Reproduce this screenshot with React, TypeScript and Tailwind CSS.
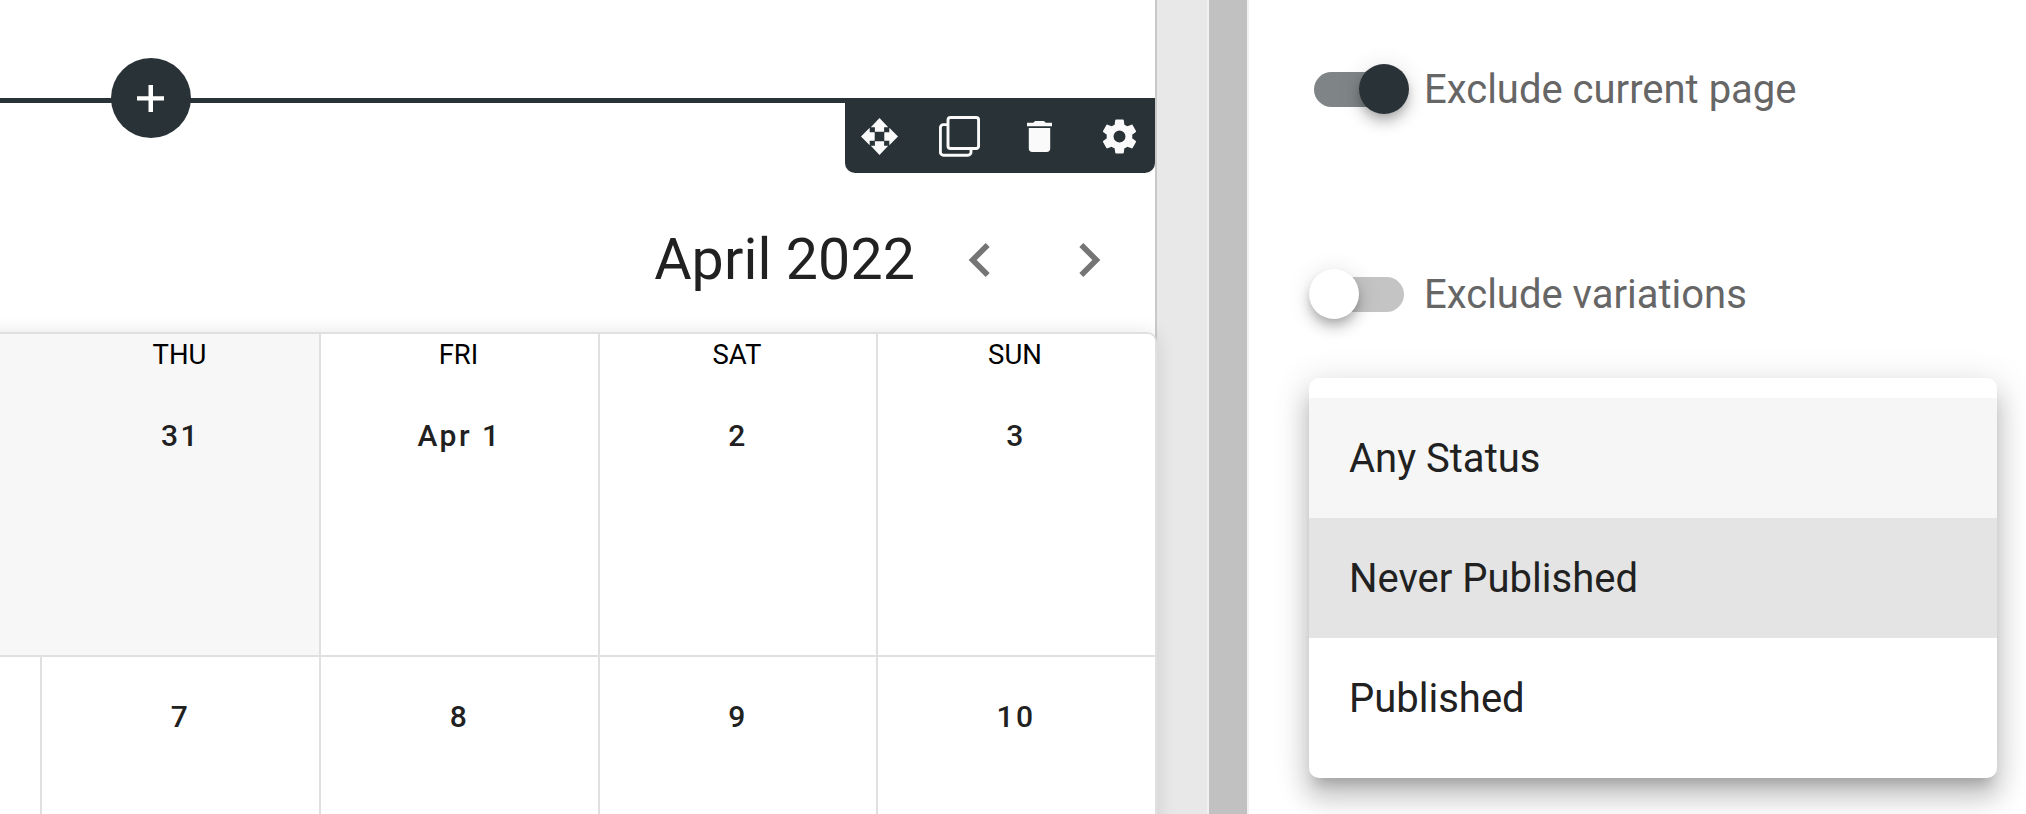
import React from "react";

const iconPaths = {
  trash: "M19,4H15.5L14.5,3H9.5L8.5,4H5V6H19M6,19A2,2 0 0,0 8,21H16A2,2 0 0,0 18,19V7H6V19Z",
  cog: "M12,15.5A3.5,3.5 0 0,1 8.5,12A3.5,3.5 0 0,1 12,8.5A3.5,3.5 0 0,1 15.5,12A3.5,3.5 0 0,1 12,15.5M19.43,12.97C19.47,12.65 19.5,12.33 19.5,12C19.5,11.67 19.47,11.34 19.43,11L21.54,9.37C21.73,9.22 21.78,8.95 21.66,8.73L19.66,5.27C19.54,5.05 19.27,4.96 19.05,5.05L16.56,6.05C16.04,5.66 15.5,5.32 14.87,5.07L14.5,2.42C14.46,2.18 14.25,2 14,2H10C9.75,2 9.54,2.18 9.5,2.42L9.13,5.07C8.5,5.32 7.96,5.66 7.44,6.05L4.95,5.05C4.73,4.96 4.46,5.05 4.34,5.27L2.34,8.73C2.21,8.95 2.27,9.22 2.46,9.37L4.57,11C4.53,11.34 4.5,11.67 4.5,12C4.5,12.33 4.53,12.65 4.57,12.97L2.46,14.63C2.27,14.78 2.21,15.05 2.34,15.27L4.34,18.73C4.46,18.95 4.73,19.03 4.95,18.95L7.44,17.94C7.96,18.34 8.5,18.68 9.13,18.93L9.5,21.58C9.54,21.82 9.75,22 10,22H14C14.25,22 14.46,21.82 14.5,21.58L14.87,18.93C15.5,18.67 16.04,18.34 16.56,17.94L19.05,18.95C19.27,19.03 19.54,18.95 19.66,18.73L21.66,15.27C21.78,15.05 21.73,14.78 21.54,14.63L19.43,12.97Z",
  left: "M15.41,16.58L10.83,12L15.41,7.41L14,6L8,12L14,18L15.41,16.58Z",
  right: "M8.59,16.58L13.17,12L8.59,7.41L10,6L16,12L10,18L8.59,16.58Z",
};

function Toolbar() {
  return (
    <div className="absolute right-0 top-[98px] grid h-[75px] w-[310px] grid-cols-[69px_91px_69px_91px] items-center rounded-b-[10px] bg-[#293237] pt-[1px] text-[#fafafa]">
      <button className="flex justify-center">
        <svg viewBox="0 0 37 37" className="size-[37px]" fill="currentColor">
          <path d="M18.5 0 27.2 9.3H23.1V13.7H13.9V9.3H9.8ZM18.5 37 27.2 27.7H23.1V23.3H13.9V27.7H9.8ZM0 18.5 8.7 9.8V14.2H13.7V22.8H8.7V27.2ZM37 18.5 28.3 9.8V14.2H23.3V22.8H28.3V27.2Z" />
        </svg>
      </button>
      <button className="flex justify-center">
        <svg viewBox="0 0 41 41" className="size-[41px]" fill="none" stroke="currentColor" strokeWidth="2.9">
          <rect x="9" y="1.5" width="30.6" height="31" rx="2.5" />
          <path d="M9 8.6H4.4a3 3 0 0 0-3 3V36.2a3 3 0 0 0 3 3H29a3 3 0 0 0 3-3V32.4" />
        </svg>
      </button>
      <button className="flex justify-center">
        <svg viewBox="5 3 14 18" preserveAspectRatio="none" className="h-[31px] w-[25px]" fill="currentColor">
          <path d={iconPaths.trash} />
        </svg>
      </button>
      <button className="flex justify-center">
        <svg viewBox="0 0 24 24" className="size-[41px]" fill="currentColor">
          <path d={iconPaths.cog} />
        </svg>
      </button>
    </div>
  );
}

function DayCell({ label, day, muted, last }: { label?: string; day?: string; muted?: boolean; last?: boolean }) {
  return (
    <div
      className={`flex flex-col items-center border-[#e0e0e0] ${last ? "pr-[1px]" : "border-r-2"} ${muted ? "bg-[#f7f7f7]" : "bg-white"}`}
    >
      {label && <div className="mt-[4px] h-[34px] pr-[2px] text-[27.5px] leading-[34px] text-black">{label}</div>}
      <div
        className={`h-[44px] text-[30px] font-medium leading-[44px] tracking-[2.5px] text-[#212121] ${label ? "mt-[42px]" : "mt-[38px]"}`}
      >
        {day}
      </div>
    </div>
  );
}

function Calendar() {
  return (
    <div className="-ml-[237px] grid h-[700px] w-[1394px] shrink-0 grid-cols-[279px_279px_279px_278px_277px] grid-rows-[323px_1fr] overflow-hidden rounded-tr-[10px] border-r-2 border-t-2 border-[#e0e0e0] bg-white shadow-[0_2px_20px_rgba(0,0,0,0.12)]">
      <div className="border-b-2 border-[#e0e0e0] bg-[#f7f7f7]" />
      <div className="grid border-b-2 border-[#e0e0e0]"><DayCell label="THU" day="31" muted /></div>
      <div className="grid border-b-2 border-[#e0e0e0]"><DayCell label="FRI" day="Apr 1" /></div>
      <div className="grid border-b-2 border-[#e0e0e0]"><DayCell label="SAT" day="2" /></div>
      <div className="grid border-b-2 border-[#e0e0e0]"><DayCell label="SUN" day="3" last /></div>
      <DayCell />
      <DayCell day="7" />
      <DayCell day="8" />
      <DayCell day="9" />
      <DayCell day="10" last />
    </div>
  );
}

function Switch({ on, label }: { on?: boolean; label: string }) {
  return (
    <label className="flex h-[60px] items-center">
      <span className={`relative ml-[5px] h-[35px] w-[90px] rounded-full ${on ? "bg-[#7f8587]" : "bg-[#c4c4c4]"}`}>
        <span
          className={`absolute -top-[8px] size-[50px] rounded-full shadow-[0_5px_10px_-2.5px_rgba(0,0,0,0.2),0_10px_12.5px_rgba(0,0,0,0.14),0_2.5px_25px_rgba(0,0,0,0.12)] ${
            on ? "left-[45px] bg-[#293237]" : "-left-[5px] bg-white"
          }`}
        />
      </span>
      <span className="ml-[20px] whitespace-nowrap pt-[2px] text-[40px] leading-[50px] text-[#666666]">{label}</span>
    </label>
  );
}

const statuses = [
  { name: "Any Status", style: "bg-[#f6f6f6]" },
  { name: "Never Published", style: "bg-[#e4e4e4]" },
  { name: "Published", style: "bg-white" },
];

export default function App() {
  return (
    <div className="flex h-[814px] w-[2026px] overflow-hidden bg-white font-[Roboto,sans-serif]">
      <main className="relative h-[814px] w-[1155px] shrink-0">
        <div className="h-[98px]" />
        <div className="h-[5px] bg-[#293237]" />
        <button className="absolute left-[111px] top-[58px] flex size-[80px] items-center justify-center rounded-full bg-[#293237]">
          <svg viewBox="0 0 80 80" className="size-[80px]" fill="white">
            <path d="M26 38.2H37.5V27H42V38.2H53V42.5H42V54H37.5V42.5H26Z" />
          </svg>
        </button>
        <Toolbar />
        <header className="flex h-[229px] items-center justify-end pb-[16px] pr-[32px] pt-[101px] text-[#757575]">
          <h1 className="mr-[31px] text-[57.3px] leading-[80px] tracking-[0.1px] text-[#212121]">April 2022</h1>
          <svg viewBox="0 0 24 24" className="size-[68px]" fill="currentColor">
            <path d={iconPaths.left} />
          </svg>
          <svg viewBox="0 0 24 24" className="ml-[41px] size-[68px]" fill="currentColor">
            <path d={iconPaths.right} />
          </svg>
        </header>
        <div className="relative z-10 flex">
          <Calendar />
        </div>
      </main>
      <div className="h-full w-[52px] shrink-0 border-l-2 border-[#c9c9c9] bg-[#e8e8e8]" />
      <div className="h-full w-[42px] shrink-0 border-x-2 border-[#f1f1f1] bg-[#c1c1c1]" />
      <aside className="flex flex-1 flex-col pl-[60px] pt-[59px]">
        <Switch on label="Exclude current page" />
        <div className="mt-[145px]">
          <Switch label="Exclude variations" />
        </div>
        <ul className="mt-[54px] h-[400px] w-[688px] overflow-hidden rounded-[10px] bg-white py-[20px] shadow-[0_12.5px_12.5px_-7.5px_rgba(0,0,0,0.2),0_20px_25px_2.5px_rgba(0,0,0,0.14),0_7.5px_35px_5px_rgba(0,0,0,0.12)]">
          {statuses.map((status) => (
            <li
              key={status.name}
              className={`flex h-[120px] items-center px-[40px] pt-[2px] text-[40px] text-[#212121] ${status.style}`}
            >
              {status.name}
            </li>
          ))}
        </ul>
      </aside>
    </div>
  );
}
